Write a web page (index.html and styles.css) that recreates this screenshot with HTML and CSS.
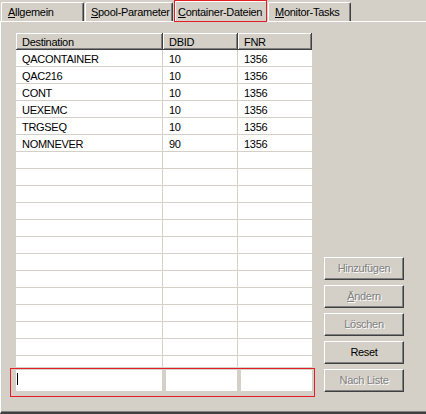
FILE: index.html
```html
<!DOCTYPE html>
<html>
<head>
<meta charset="utf-8">
<link rel="stylesheet" href="styles.css">
</head>
<body>
<div class="tabs">
  <div class="tab tab-1"><u>A</u>llgemein</div>
  <div class="tab tab-2"><u>S</u>pool-Parameter</div>
  <div class="tab tab-sel"><u>C</u>ontainer-Dateien</div>
  <div class="tab tab-4"><u>M</u>onitor-Tasks</div>
</div>
<div class="panel">
  <div class="left">
    <div class="grid">
      <div class="head">
        <div class="hcell">Destination</div>
        <div class="hcell">DBID</div>
        <div class="hcell">FNR</div>
      </div>
      <div class="row"><div class="cell">QACONTAINER</div><div class="cell">10</div><div class="cell">1356</div></div>
      <div class="row"><div class="cell">QAC216</div><div class="cell">10</div><div class="cell">1356</div></div>
      <div class="row"><div class="cell">CONT</div><div class="cell">10</div><div class="cell">1356</div></div>
      <div class="row"><div class="cell">UEXEMC</div><div class="cell">10</div><div class="cell">1356</div></div>
      <div class="row"><div class="cell">TRGSEQ</div><div class="cell">10</div><div class="cell">1356</div></div>
      <div class="row"><div class="cell">NOMNEVER</div><div class="cell">90</div><div class="cell">1356</div></div>
      <div class="row"><div class="cell"></div><div class="cell"></div><div class="cell"></div></div>
      <div class="row"><div class="cell"></div><div class="cell"></div><div class="cell"></div></div>
      <div class="row"><div class="cell"></div><div class="cell"></div><div class="cell"></div></div>
      <div class="row"><div class="cell"></div><div class="cell"></div><div class="cell"></div></div>
      <div class="row"><div class="cell"></div><div class="cell"></div><div class="cell"></div></div>
      <div class="row"><div class="cell"></div><div class="cell"></div><div class="cell"></div></div>
      <div class="row"><div class="cell"></div><div class="cell"></div><div class="cell"></div></div>
      <div class="row"><div class="cell"></div><div class="cell"></div><div class="cell"></div></div>
      <div class="row"><div class="cell"></div><div class="cell"></div><div class="cell"></div></div>
      <div class="row"><div class="cell"></div><div class="cell"></div><div class="cell"></div></div>
      <div class="row"><div class="cell"></div><div class="cell"></div><div class="cell"></div></div>
      <div class="row"><div class="cell"></div><div class="cell"></div><div class="cell"></div></div>
      <div class="row"><div class="cell"></div><div class="cell"></div><div class="cell"></div></div>
    </div>
    <div class="edit-wrap">
      <div class="edit-row">
        <div class="edit edit-1"><span class="caret"></span></div>
        <div class="edit edit-2"></div>
        <div class="edit edit-3"></div>
      </div>
    </div>
  </div>
  <div class="right">
    <div class="btn disabled">Hinzufügen</div>
    <div class="btn disabled"><u>Ä</u>ndern</div>
    <div class="btn disabled">Löschen</div>
    <div class="btn">Reset</div>
    <div class="btn disabled">Nach Liste</div>
  </div>
</div>
</body>
</html>
```

FILE: styles.css
```css
html, body {
  margin: 0;
  padding: 0;
}
body {
  width: 426px;
  height: 414px;
  overflow: hidden;
  background: #d4d0c8;
  font-family: "Liberation Sans", Arial, sans-serif;
  font-size: 11px;
  letter-spacing: -0.3px;
  color: #000;
}
u {
  text-decoration: underline;
  text-underline-offset: 1px;
}

/* Tabs */
.tabs {
  display: flex;
  align-items: flex-start;
  gap: 1px;
  padding-left: 1px;
  height: 21px;
}
.tab {
  box-sizing: border-box;
  margin-top: 2px;
  height: 19px;
  padding: 2px 0 0 6px;
  line-height: 14px;
  border-left: 1px solid #fff;
  border-top: 1px solid #fff;
  border-right: 1px solid #404040;
  border-radius: 2px 2px 0 0;
  box-shadow: inset -1px 0 #808080;
  white-space: nowrap;
}
.tab-1 { width: 83px; }
.tab-2 { width: 88px; padding-left: 5px; }
.tab-4 { width: 83px; }
.tab-sel {
  position: relative;
  z-index: 1;
  width: 93px;
  height: 22px;
  margin-top: 0;
  margin-bottom: -1px;
  padding: 4px 0 0 3px;
  border: 1px solid #e31e24;
  border-radius: 0;
  background: #d4d0c8;
  box-shadow: inset 1px 1px #fff;
}

/* Panel */
.panel {
  display: flex;
  height: 389px;
  padding-bottom: 1px;
  border-top: 1px solid #fff;
  border-left: 1px solid #fff;
  border-bottom: 2px solid #404040;
  box-shadow: inset 0 -1px #808080;
}
.left {
  padding-left: 9px;
  width: 305px;
}
.grid {
  margin: 11px 0 0 6px;
  width: 296px;
  height: 334px;
  overflow: hidden;
  background: #fff;
}
.head {
  display: grid;
  grid-template-columns: 147px 75px 74px;
  height: 17px;
  background: #d4d0c8;
}
.hcell {
  box-sizing: border-box;
  height: 17px;
  padding: 2px 0 0 6px;
  line-height: 14px;
  border-right: 1px solid #404040;
  border-bottom: 1px solid #404040;
  box-shadow: inset 1px 1px #fff, inset -1px -1px #808080;
  white-space: nowrap;
}
.row {
  display: grid;
  grid-template-columns: 147px 75px 74px;
  height: 17px;
}
.cell {
  box-sizing: border-box;
  height: 17px;
  padding: 2px 0 0 6px;
  line-height: 14px;
  border-bottom: 1px solid #d4d0c8;
  border-right: 1px solid #d4d0c8;
  white-space: nowrap;
  overflow: hidden;
}
.cell:last-child {
  border-right: 0;
}

/* Edit row */
.edit-wrap {
  margin-top: 1px;
  border: 1px solid #e31e24;
  padding: 1px 2px 5px 5px;
}
.edit-row {
  display: flex;
  gap: 4px;
}
.edit {
  height: 21px;
  background: #fff;
}
.edit-1 { width: 146px; }
.edit-2 { width: 71px; }
.edit-3 { width: 71px; }
.caret {
  display: block;
  width: 1px;
  height: 12px;
  margin: 3px 0 0 1px;
  background: #000;
}

/* Buttons */
.right {
  display: flex;
  flex-direction: column;
  gap: 5px;
  margin-left: 9px;
  padding-top: 235px;
}
.btn {
  box-sizing: border-box;
  width: 80px;
  height: 23px;
  line-height: 21px;
  text-align: center;
  border-top: 1px solid #fff;
  border-left: 1px solid #fff;
  border-right: 1px solid #404040;
  border-bottom: 1px solid #404040;
  box-shadow: inset -1px -1px #808080;
  white-space: nowrap;
}
.btn.disabled {
  color: #808080;
  text-shadow: 1px 1px 0 #fff;
}
```
